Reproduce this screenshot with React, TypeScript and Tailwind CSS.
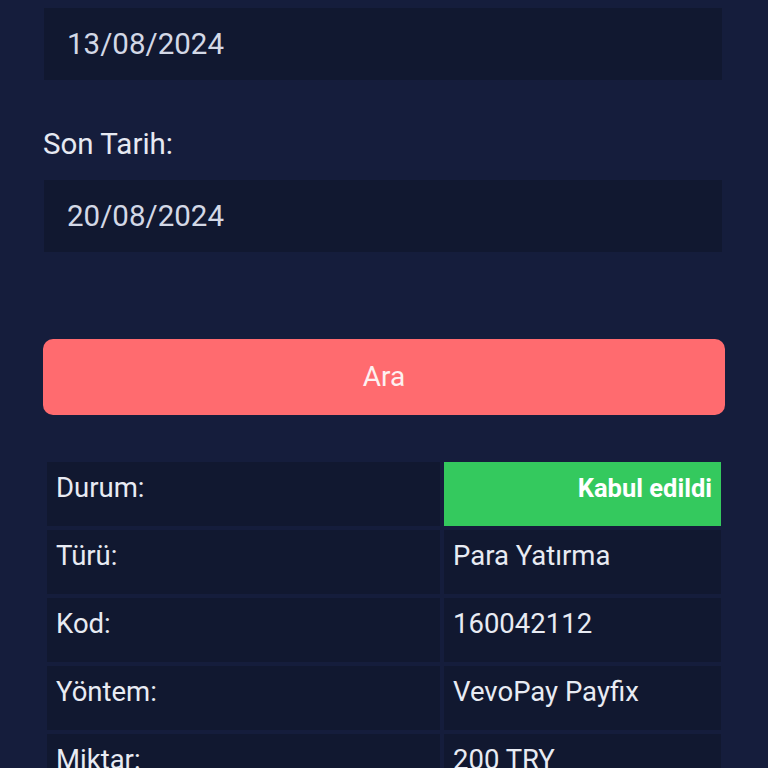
const rows = [
  { label: 'Durum:', value: 'Kabul edildi', status: true },
  { label: 'Türü:', value: 'Para Yatırma' },
  { label: 'Kod:', value: '160042112' },
  { label: 'Yöntem:', value: 'VevoPay Payfix' },
  { label: 'Miktar:', value: '200 TRY' },
];

function DateField({ value }: { value: string }) {
  return (
    <div className="h-[72px] w-[678px] bg-[#111830] flex items-center pl-[23px] text-[29.5px] text-[#d3d8e6]">
      {value}
    </div>
  );
}

export default function App() {
  return (
    <div
      className="min-h-screen w-full bg-[#151d3c] text-[#e8ebf3] overflow-hidden"
      style={{ fontFamily: 'Roboto, "Noto Sans", sans-serif' }}
    >
      <div className="px-[43px] pt-[8px]">
        <div className="pl-[1px]">
          <DateField value="13/08/2024" />
        </div>

        <div className="mt-[44px] text-[29.5px] leading-[40px] text-[#e6e9f2]">Son Tarih:</div>

        <div className="mt-[16px] pl-[1px]">
          <DateField value="20/08/2024" />
        </div>

        <button className="mt-[87px] w-[682px] h-[76px] rounded-[10px] bg-[#ff6b6f] text-[28px] text-[#fdf1f1] flex items-center justify-center">
          Ara
        </button>

        <table className="mt-[43px] w-[682px] border-separate border-spacing-[4px]">
          <tbody>
            {rows.map((r) => (
              <tr key={r.label}>
                <td className="w-[393px] h-[64px] bg-[#111830] align-top pl-[9px] pt-[8px] text-[27.5px] leading-[36px] text-[#e8ebf3]">
                  {r.label}
                </td>
                {r.status ? (
                  <td className="h-[64px] bg-[#34c95e] align-top text-right pr-[9px] pt-[8px] text-[25.5px] leading-[36px] font-bold text-white">
                    {r.value}
                  </td>
                ) : (
                  <td className="h-[64px] bg-[#111830] align-top pl-[9px] pt-[8px] text-[27.5px] leading-[36px] text-[#e8ebf3]">
                    {r.value}
                  </td>
                )}
              </tr>
            ))}
          </tbody>
        </table>
      </div>
    </div>
  );
}
